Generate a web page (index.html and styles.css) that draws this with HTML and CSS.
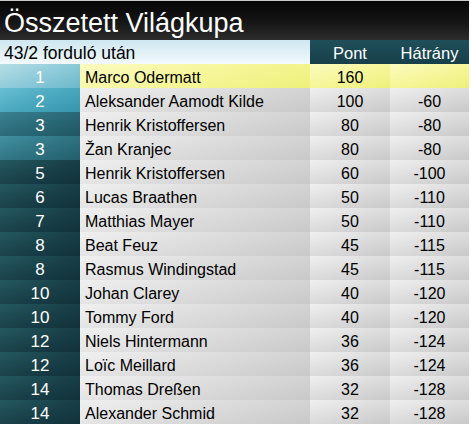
FILE: index.html
```html
<!DOCTYPE html>
<html lang="hu">
<head>
<meta charset="utf-8">
<title>Összetett Világkupa</title>
<link rel="stylesheet" href="styles.css">
</head>
<body>
<div class="board">
  <div class="title">Összetett Világkupa</div>
  <div class="grid">
    <div class="sub">43/2 forduló után</div>
    <div class="hcell">Pont</div>
    <div class="hcell">Hátrány</div>

    <div class="rank r1">1</div><div class="name lead">Marco Odermatt</div><div class="num lead">160</div><div class="num lead"></div>
    <div class="rank r2">2</div><div class="name">Aleksander Aamodt Kilde</div><div class="num">100</div><div class="num">-60</div>
    <div class="rank r3">3</div><div class="name">Henrik Kristoffersen</div><div class="num">80</div><div class="num">-80</div>
    <div class="rank r4">3</div><div class="name">Žan Kranjec</div><div class="num">80</div><div class="num">-80</div>
    <div class="rank">5</div><div class="name">Henrik Kristoffersen</div><div class="num">60</div><div class="num">-100</div>
    <div class="rank">6</div><div class="name">Lucas Braathen</div><div class="num">50</div><div class="num">-110</div>
    <div class="rank">7</div><div class="name">Matthias Mayer</div><div class="num">50</div><div class="num">-110</div>
    <div class="rank">8</div><div class="name">Beat Feuz</div><div class="num">45</div><div class="num">-115</div>
    <div class="rank">8</div><div class="name">Rasmus Windingstad</div><div class="num">45</div><div class="num">-115</div>
    <div class="rank">10</div><div class="name">Johan Clarey</div><div class="num">40</div><div class="num">-120</div>
    <div class="rank">10</div><div class="name">Tommy Ford</div><div class="num">40</div><div class="num">-120</div>
    <div class="rank">12</div><div class="name">Niels Hintermann</div><div class="num">36</div><div class="num">-124</div>
    <div class="rank">12</div><div class="name">Loïc Meillard</div><div class="num">36</div><div class="num">-124</div>
    <div class="rank">14</div><div class="name">Thomas Dreßen</div><div class="num">32</div><div class="num">-128</div>
    <div class="rank">14</div><div class="name">Alexander Schmid</div><div class="num">32</div><div class="num">-128</div>
  </div>
</div>
</body>
</html>
```

FILE: styles.css
```css
html, body {
  margin: 0;
  padding: 0;
  background: #ffffff;
}
body {
  font-family: "Liberation Sans", Arial, sans-serif;
  width: 471px;
  height: 426px;
  overflow: hidden;
}
.board {
  width: 469px;
}
.title {
  height: 37px;
  padding-top: 2px;
  border-top: 1px solid #c8c8c8;
  background: linear-gradient(to bottom, #050505 0%, #161616 55%, #2c2c2c 100%);
  color: #ffffff;
  font-size: 27px;
  line-height: 40px;
  padding-left: 4px;
  box-sizing: content-box;
}
.grid {
  display: grid;
  grid-template-columns: 80px 230px 80px 79px;
  grid-auto-rows: 24px;
}
.sub, .hcell, .rank, .name, .num {
  box-sizing: border-box;
  padding-top: 4px;
  line-height: 20px;
}
.sub {
  grid-column: 1 / 3;
  background: linear-gradient(to bottom, #cfe7f0 0%, #e4f2f7 60%, #f3fafc 100%);
  color: #000000;
  font-size: 17.5px;
  padding-left: 4px;
  padding-top: 3px;
}
.hcell {
  background: linear-gradient(to bottom, #1f4f5a 0%, #173f49 100%);
  color: #ffffff;
  font-size: 16.5px;
  text-align: center;
  padding-top: 3px;
}
.rank {
  color: #ffffff;
  font-size: 17px;
  text-align: center;
  background: linear-gradient(160deg, #25596400 0%, #00000000 100%), linear-gradient(160deg, #25585f 0%, #183f48 55%, #11313a 100%);
}
.rank.r1 { background: linear-gradient(160deg, #b6dee7 0%, #8fcbd9 50%, #6cb9cc 100%); }
.rank.r2 { background: linear-gradient(160deg, #68bfd3 0%, #4aa8bf 50%, #3694ac 100%); }
.rank.r3 { background: linear-gradient(160deg, #3a8191 0%, #2b6a78 50%, #1f5562 100%); }
.rank.r4 { background: linear-gradient(160deg, #4290a2 0%, #307584 50%, #235e6b 100%); }
.name, .num {
  color: #000000;
  font-size: 16px;
  background: linear-gradient(165deg, #f0f0f0 0%, #dcdcdc 50%, #c9c9c9 100%);
  white-space: nowrap;
  overflow: hidden;
}
.name {
  padding-left: 5px;
}
.num {
  text-align: center;
}
.name.lead, .num.lead {
  background: linear-gradient(165deg, #fbfbc0 0%, #f6f69a 50%, #eef07a 100%);
}
```
